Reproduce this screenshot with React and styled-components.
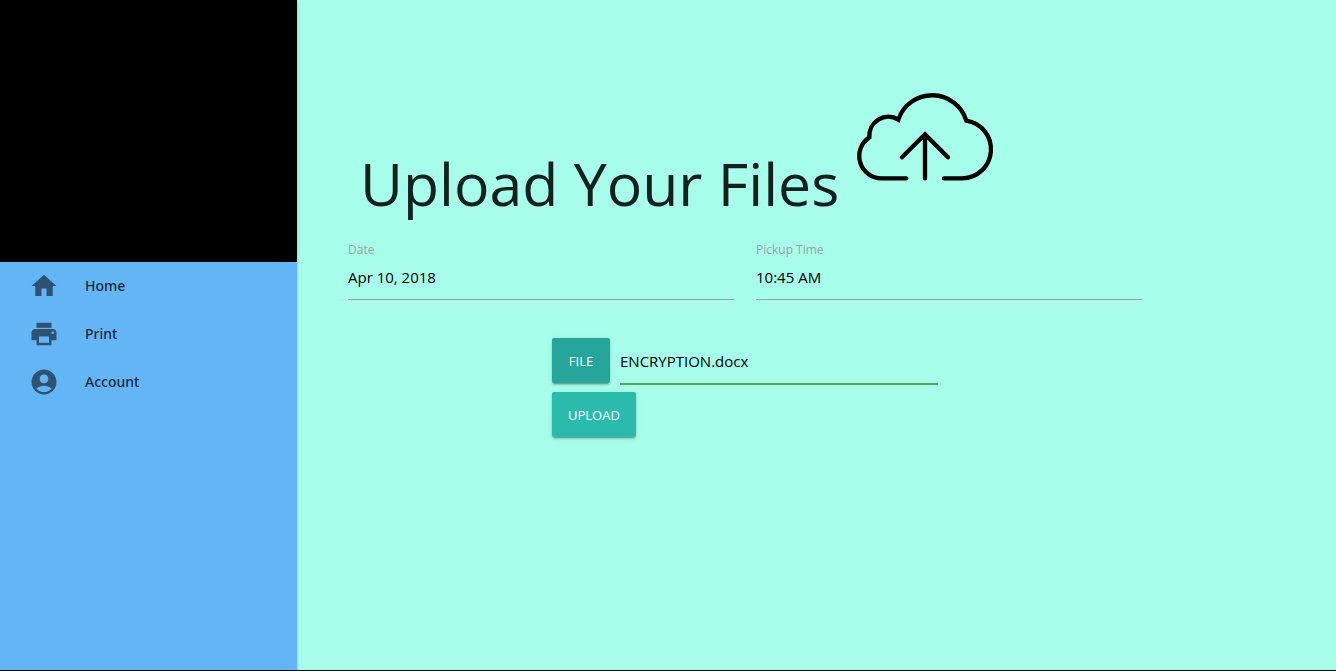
import React, { useState } from "react";
import styled, { createGlobalStyle } from "styled-components";
import { MdHome, MdPrint, MdAccountCircle } from "react-icons/md";

const GlobalStyle = createGlobalStyle`
  *, *::before, *::after { box-sizing: border-box; }
  body {
    margin: 0;
    background: #a7ffeb;
    color: rgba(0, 0, 0, 0.87);
    font-family: "Open Sans", "Noto Sans", sans-serif;
    font-size: 15px;
    line-height: 22px;
  }
`;

const Page = styled.div`
  display: flex;
  min-height: 100vh;
  border-bottom: 1px solid #000;
`;

const Sidebar = styled.nav`
  flex: 0 0 297px;
  background: #64b5f6;
  box-shadow: 0 2px 2px rgba(0, 0, 0, 0.14), 0 1px 5px rgba(0, 0, 0, 0.12);
`;

const Banner = styled.div`
  height: 262px;
  background: #000;
`;

const Menu = styled.ul`
  margin: 0;
  padding: 0;
  list-style: none;
`;

const MenuLink = styled.a`
  display: flex;
  align-items: center;
  gap: 26px;
  height: 48px;
  padding: 0 29px;
  color: rgba(0, 0, 0, 0.8);
  font-family: "Noto Sans", sans-serif;
  font-size: 14px;
  font-weight: 500;
  text-decoration: none;

  svg {
    width: 30px;
    height: 30px;
    color: rgba(0, 0, 0, 0.54);
  }
`;

const Main = styled.main`
  flex: 1;
  min-width: 0;
  padding: 80px 51px 40px;
`;

const Form = styled.form`
  max-width: 794px;
`;

const Header = styled.header`
  display: flex;
  align-items: flex-end;
  padding-left: 12px;
`;

const Title = styled.h1`
  margin: 0;
  font-size: 59px;
  font-weight: 400;
  line-height: 66px;
  white-space: nowrap;
`;

const CloudIcon = styled.svg`
  flex: none;
  width: 170px;
  height: 120px;
  margin-bottom: 16px;
  fill: none;
  stroke: #000;
  stroke-width: 13;
`;

const Fields = styled.div`
  display: grid;
  grid-template-columns: 1fr 1fr;
  gap: 22px;
  margin-top: 26px;
`;

const Field = styled.div`
  display: flex;
  flex-direction: column;
`;

const Label = styled.label`
  color: #9e9e9e;
  font-size: 12px;
  line-height: 16px;
`;

const TextInput = styled.input`
  width: 100%;
  min-width: 0;
  height: ${(p) => (p.$valid ? 47 : 42)}px;
  padding: 0 0 ${(p) => (p.$valid ? 0 : 4)}px;
  border: 0;
  border-bottom: ${(p) => (p.$valid ? "2px solid #4caf50" : "1px solid #9e9e9e")};
  background: transparent;
  color: #000;
  font: inherit;
  outline: none;
`;

const Actions = styled.div`
  display: flex;
  flex-direction: column;
  align-items: flex-start;
  gap: 7px;
  width: 386px;
  max-width: 100%;
  margin: 38px auto 0;
`;

const FileRow = styled.div`
  display: flex;
  align-items: flex-start;
  gap: 10px;
  width: 100%;
`;

const Button = styled.button`
  flex: none;
  min-width: 58px;
  height: 45px;
  padding: 0 16px;
  border: 0;
  border-radius: 2px;
  background: ${(p) => (p.$bright ? "#2bbbad" : "#26a69a")};
  box-shadow: 0 2px 2px rgba(0, 0, 0, 0.14), 0 1px 5px rgba(0, 0, 0, 0.12),
    0 3px 1px -2px rgba(0, 0, 0, 0.2);
  color: #fff;
  font: inherit;
  font-size: 13px;
  text-transform: uppercase;
  cursor: pointer;
`;

const links = [
  { label: "Home", Icon: MdHome },
  { label: "Print", Icon: MdPrint },
  { label: "Account", Icon: MdAccountCircle },
];

export default function App() {
  const [date, setDate] = useState("Apr 10, 2018");
  const [time, setTime] = useState("10:45 AM");

  return (
    <>
      <GlobalStyle />
      <Page>
        <Sidebar>
          <Banner />
          <Menu>
            {links.map(({ label, Icon }) => (
              <li key={label}>
                <MenuLink href="#">
                  <Icon aria-hidden="true" />
                  {label}
                </MenuLink>
              </li>
            ))}
          </Menu>
        </Sidebar>
        <Main>
          <Form onSubmit={(e) => e.preventDefault()}>
            <Header>
              <Title>Upload Your Files</Title>
              <CloudIcon viewBox="0 0 510 360" aria-hidden="true">
                <path
                  strokeLinecap="round"
                  d="M202 295H128A67 67 0 0 1 91 172A57 57 0 0 1 178 119A107 107 0 0 1 382 122A87 87 0 0 1 370 295H315"
                />
                <path strokeLinecap="round" d="M258 295V163M189 232L258 163L327 232" />
              </CloudIcon>
            </Header>
            <Fields>
              <Field>
                <Label htmlFor="date">Date</Label>
                <TextInput id="date" value={date} onChange={(e) => setDate(e.target.value)} />
              </Field>
              <Field>
                <Label htmlFor="time">Pickup Time</Label>
                <TextInput id="time" value={time} onChange={(e) => setTime(e.target.value)} />
              </Field>
            </Fields>
            <Actions>
              <FileRow>
                <Button type="button">File</Button>
                <TextInput $valid readOnly aria-label="Selected file" value="ENCRYPTION.docx" />
              </FileRow>
              <Button $bright type="submit">Upload</Button>
            </Actions>
          </Form>
        </Main>
      </Page>
    </>
  );
}
